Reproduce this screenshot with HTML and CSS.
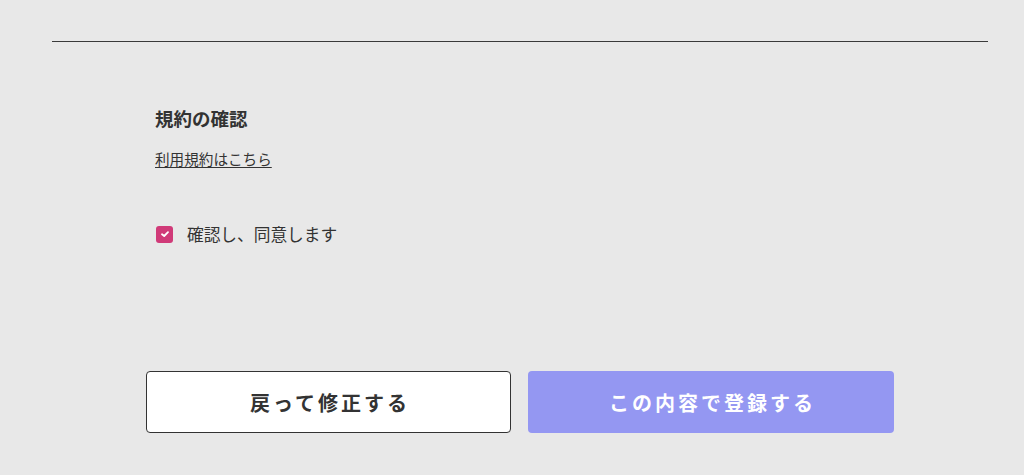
FILE: index.html
```html
<!DOCTYPE html>
<html lang="ja">
<head>
<meta charset="utf-8">
<link rel="stylesheet" href="styles.css">
</head>
<body>
<div class="page">
  <hr class="divider">
  <section class="terms">
    <h2 class="terms-title">規約の確認</h2>
    <a class="terms-link" href="#">利用規約はこちら</a>
    <label class="agree">
      <span class="check">
        <svg width="10" height="8" viewBox="0 0 10 8"><path d="M2 4.2 L4.2 6 L8 2.2" fill="none" stroke="#fff" stroke-width="1.8" stroke-linecap="round" stroke-linejoin="round"/></svg>
      </span>
      <span class="agree-text">確認し、同意します</span>
    </label>
  </section>
  <div class="actions">
    <button class="btn btn-back">戻って修正する</button>
    <button class="btn btn-submit">この内容で登録する</button>
  </div>
</div>
</body>
</html>
```
FILE: styles.css
```css
html, body {
  margin: 0;
  padding: 0;
  background: #e8e8e8;
}
body {
  font-family: "Noto Sans CJK JP", "Noto Sans", sans-serif;
  color: #333;
  width: 1024px;
  height: 475px;
  overflow: hidden;
}
.page {
  padding-top: 41px;
}
.divider {
  margin: 0 0 0 52px;
  width: 936px;
  border: 0;
  border-top: 1px solid #3a3a3a;
  height: 0;
}
.terms {
  padding-left: 155px;
  padding-top: 62px;
}
.terms-title {
  margin: 0;
  font-size: 18.5px;
  font-weight: 700;
  line-height: 28px;
  color: #333;
}
.terms-link {
  display: inline-block;
  margin-top: 17px;
  font-size: 14.6px;
  line-height: 20px;
  color: #333;
  text-decoration: underline;
  text-underline-offset: 2px;
}
.agree {
  display: flex;
  align-items: center;
  margin-top: 52px;
}
.check {
  width: 17px;
  height: 17px;
  margin-left: 1px;
  border-radius: 3px;
  background: #d03a78;
  display: flex;
  align-items: center;
  justify-content: center;
}
.agree-text {
  margin-left: 14px;
  font-size: 16.7px;
  line-height: 24px;
  color: #333;
}
.actions {
  display: flex;
  gap: 17px;
  padding-left: 146px;
  margin-top: 125px;
}
.btn {
  height: 62px;
  border-radius: 4px;
  font-family: "Noto Sans CJK JP", "Noto Sans", sans-serif;
  font-size: 20px;
  font-weight: 700;
  letter-spacing: 3px;
  padding: 0 0 0 3px;
  cursor: pointer;
}
.btn-back {
  width: 365px;
  background: #fff;
  border: 1px solid #333;
  color: #333;
}
.btn-submit {
  width: 366px;
  background: #9497f2;
  border: 0;
  color: #fff;
}
```
